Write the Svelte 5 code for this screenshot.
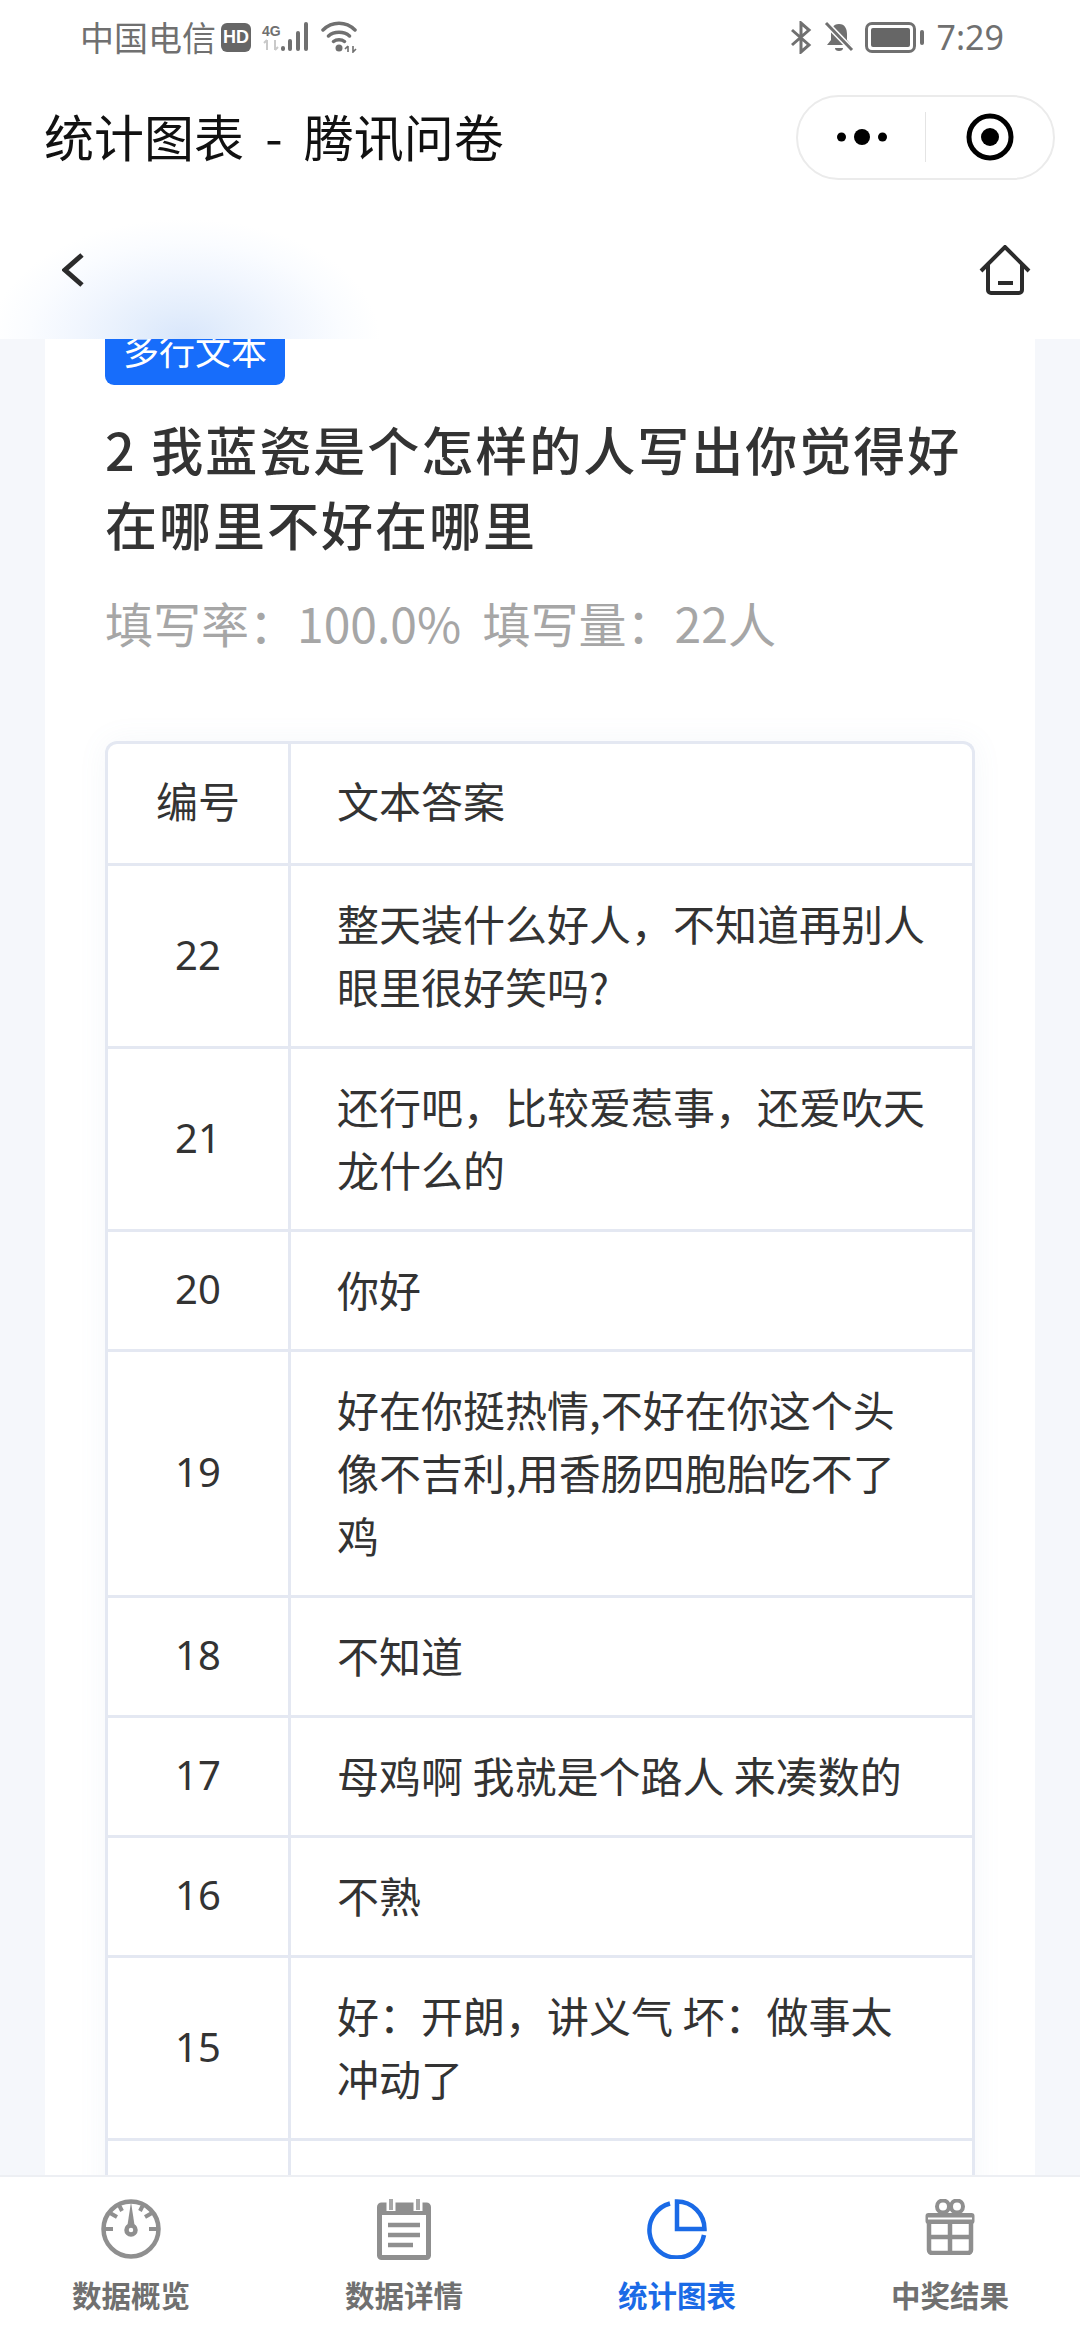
<script lang="ts">
    const rows = [
        { no: 22, text: '整天装什么好人，不知道再别人眼里很好笑吗?' },
        { no: 21, text: '还行吧，比较爱惹事，还爱吹天龙什么的' },
        { no: 20, text: '你好' },
        { no: 19, text: '好在你挺热情,不好在你这个头像不吉利,用香肠四胞胎吃不了鸡' },
        { no: 18, text: '不知道' },
        { no: 17, text: '母鸡啊 我就是个路人 来凑数的' },
        { no: 16, text: '不熟' },
        { no: 15, text: '好：开朗，讲义气 坏：做事太冲动了' }
    ];
    const tabs = [
        { id: 'overview', label: '数据概览' },
        { id: 'detail', label: '数据详情' },
        { id: 'chart', label: '统计图表' },
        { id: 'prize', label: '中奖结果' }
    ];
    const active = 'chart';
</script>

<div class="screen">
    <div class="status">
        <div class="status-left">
            <span class="carrier">中国电信</span>
            <span class="hd">HD</span>
            <span class="net">
                <span class="net-4g">4G</span>
                <svg width="18" height="12" viewBox="0 0 18 12"><path d="M5 1v10M2 4l3-3M13 1v10M13 11l3-3" fill="none" stroke="#c9c9c9" stroke-width="2"/></svg>
            </span>
            <svg class="bars" width="30" height="32" viewBox="0 0 30 32">
                <rect x="0" y="25" width="4" height="5" rx="2" fill="#707070"/>
                <rect x="7" y="18" width="4" height="12" rx="2" fill="#707070"/>
                <rect x="15" y="10" width="4" height="20" rx="2" fill="#707070"/>
                <rect x="23" y="1" width="4" height="29" rx="2" fill="#707070"/>
            </svg>
            <svg class="wifi" width="38" height="32" viewBox="0 0 38 32">
                <path d="M2 9C11 0 25 0 34 9M7.500 15C13 10 23 10 28.500 15M12.500 20.500C15.500 18 20.500 18 23.500 20.500" fill="none" stroke="#707070" stroke-width="3.500" stroke-linecap="round"/>
                <circle cx="18" cy="27" r="3.500" fill="#707070"/>
                <path d="M27 25v6M24 28l3-3M32 25v6l3-3" fill="none" stroke="#707070" stroke-width="1.600"/>
            </svg>
        </div>
        <div class="status-right">
            <svg width="22" height="33" viewBox="0 0 22 33">
                <path d="M2 9l17 15-8 7V2l8 7L2 24" fill="none" stroke="#707070" stroke-width="3"/>
            </svg>
            <svg width="30" height="32" viewBox="0 0 30 32">
                <path d="M15 3c6 0 8 5 8 10v6l4 5H3l4-5v-6c0-5 2-10 8-10z" fill="#707070"/>
                <path d="M11 27h8a4 3 0 0 1-8 0z" fill="#707070"/>
                <path d="M3 3l25 26" stroke="#fff" stroke-width="6"/>
                <path d="M2 2l26 27" stroke="#707070" stroke-width="3"/>
            </svg>
            <span class="battery"><span class="battery-fill"></span></span>
            <span class="battery-nub"></span>
            <span class="time">7:29</span>
        </div>
    </div>

    <div class="nav">
        <span class="nav-title">统计图表 - 腾讯问卷</span>
        <div class="capsule">
            <div class="capsule-part">
                <svg width="50" height="18" viewBox="0 0 50 18">
                    <circle cx="4.500" cy="9" r="4.500"/><circle cx="25" cy="9" r="8"/><circle cx="45.500" cy="9" r="4.500"/>
                </svg>
            </div>
            <div class="capsule-part last">
                <svg width="48" height="48" viewBox="0 0 48 48">
                    <circle cx="24" cy="24" r="21" fill="none" stroke="#000" stroke-width="5"/>
                    <circle cx="24" cy="24" r="9"/>
                </svg>
            </div>
        </div>
    </div>

    <div class="subnav">
        <svg width="24" height="36" viewBox="0 0 24 36">
            <path d="M20 3L3 18l17 15" fill="none" stroke="#2b2b2b" stroke-width="5"/>
        </svg>
        <svg width="54" height="52" viewBox="0 0 54 52">
            <path d="M3 26L27 2l24 24" fill="none" stroke="#2b2b2b" stroke-width="4"/>
            <path d="M10 20v25a3 3 0 0 0 3 3h28a3 3 0 0 0 3-3V20" fill="none" stroke="#2b2b2b" stroke-width="4"/>
            <path d="M20 38h15" stroke="#2b2b2b" stroke-width="4"/>
        </svg>
    </div>

    <main class="content">
        <section class="card">
            <span class="tag">多行文本</span>
            <h2 class="question">2 我蓝瓷是个怎样的人写出你觉得好在哪里不好在哪里</h2>
            <p class="stats">填写率：100.0%&nbsp;&nbsp;填写量：22人</p>
            <div class="table-wrap">
                <table>
                    <thead>
                        <tr><th class="no">编号</th><th class="ans">文本答案</th></tr>
                    </thead>
                    <tbody>
                        {#each rows as r}
                            <tr><td class="no">{r.no}</td><td class="ans">{r.text}</td></tr>
                        {/each}
                        <tr class="next"><td class="no"></td><td class="ans"></td></tr>
                    </tbody>
                </table>
            </div>
        </section>
    </main>

    <nav class="tabs">
        {#each tabs as t}
            <div class="tab" class:active={active === t.id}>
                {#if t.id === 'overview'}
                    <svg width="60" height="60" viewBox="0 0 60 60">
                        <circle cx="30" cy="30" r="27.500" fill="none" stroke="#8f8f8f" stroke-width="4.500"/>
                        <path d="M4 30h8M48 30h8M9 14l7 4M51 14l-7 4M18 6l3 6M42 6l-3 6" stroke="#8f8f8f" stroke-width="4"/>
                        <path d="M30 3l-3.500 23h7z" fill="#8f8f8f"/>
                        <circle cx="30" cy="31" r="4.500" fill="#fff" stroke="#8f8f8f" stroke-width="4.500"/>
                    </svg>
                {:else if t.id === 'detail'}
                    <svg width="54" height="61" viewBox="0 0 54 61">
                        <path d="M2.500 8a2 2 0 0 1 2-2h45a2 2 0 0 1 2 2v48.500a2 2 0 0 1-2 2h-45a2 2 0 0 1-2-2z" fill="none" stroke="#8f8f8f" stroke-width="5"/>
                        <path d="M1 5h52v11H1z" fill="#8f8f8f"/>
                        <path d="M14 0v12M41 0v12" stroke="#fff" stroke-width="9"/>
                        <path d="M14 0v11M41 0v11" stroke="#a8a8a8" stroke-width="4"/>
                        <path d="M11 26h32M11 36h32M11 46h25" stroke="#8f8f8f" stroke-width="4.500"/>
                    </svg>
                {:else if t.id === 'chart'}
                    <svg width="60" height="60" viewBox="0 0 60 60">
                        <path d="M23 4.500A27.500 27.500 0 1 0 57 36" fill="none" stroke="#1a6ae6" stroke-width="4.500"/>
                        <path d="M30 2.500A27.500 27.500 0 0 1 57.500 30H30z" fill="none" stroke="#1a6ae6" stroke-width="4.500"/>
                    </svg>
                {:else}
                    <svg width="54" height="56" viewBox="0 0 54 56">
                        <circle cx="20" cy="7.500" r="6" fill="none" stroke="#8f8f8f" stroke-width="4"/>
                        <circle cx="34" cy="7.500" r="6" fill="none" stroke="#8f8f8f" stroke-width="4"/>
                        <rect x="2.500" y="14" width="49" height="11" rx="3" fill="#8f8f8f"/>
                        <path d="M6 22h42v29a3 3 0 0 1-3 3H9a3 3 0 0 1-3-3z" fill="none" stroke="#8f8f8f" stroke-width="4.500"/>
                        <path d="M27 25v28M6 38h42" stroke="#8f8f8f" stroke-width="4.500"/>
                        <path d="M5 19.500h44" stroke="#fff" stroke-width="2"/>
                    </svg>
                {/if}
                <span class="tab-label">{t.label}</span>
            </div>
        {/each}
    </nav>
</div>

<style>
    :global(body) {
        margin: 0;
        background: #fff;
    }
    .screen {
        width: 1080px;
        height: 2340px;
        display: flex;
        flex-direction: column;
        overflow: hidden;
        font-family: "Noto Sans CJK SC", "Noto Sans", sans-serif;
        background: #f5f7fb;
    }

    .status {
        height: 70px;
        flex: none;
        box-sizing: border-box;
        background: #fff;
        display: flex;
        justify-content: space-between;
        align-items: center;
        padding: 4px 76px 0 80px;
        color: #707070;
    }
    .status-left, .status-right {
        display: flex;
        align-items: center;
    }
    .carrier {
        font-size: 34px;
        line-height: 36px;
    }
    .hd {
        margin-left: 5px;
        width: 30px;
        height: 29px;
        border-radius: 6px;
        background: #666;
        color: #fff;
        font: 700 18px/29px "Liberation Sans", sans-serif;
        text-align: center;
    }
    .net {
        margin-left: 11px;
        width: 18px;
        display: flex;
        flex-direction: column;
    }
    .net-4g {
        font: 700 14px/15px "Liberation Sans", sans-serif;
        color: #707070;
    }
    .bars { margin-left: 1px; }
    .wifi { margin-left: 10px; }
    .status-right svg + svg { margin-left: 12px; }
    .battery {
        margin-left: 11px;
        width: 51px;
        height: 31px;
        box-sizing: border-box;
        border: 3px solid #707070;
        border-radius: 7px;
        padding: 3px;
        display: flex;
    }
    .battery-fill {
        flex: 1;
        background: #666;
        border-radius: 2px;
    }
    .battery-nub {
        margin-left: 4px;
        width: 4px;
        height: 15px;
        background: #707070;
        border-radius: 2px;
    }
    .time {
        margin-left: 13px;
        font: 34px/36px "Noto Sans", sans-serif;
    }

    .nav {
        height: 130px;
        flex: none;
        background: #fff;
        display: flex;
        align-items: center;
        justify-content: space-between;
        padding: 0 25px 0 44px;
        box-sizing: border-box;
    }
    .nav-title {
        font-size: 50px;
        line-height: 60px;
        color: #111;
        word-spacing: 10px;
    }
    .capsule {
        margin-top: 4px;
        width: 259px;
        height: 85px;
        box-sizing: border-box;
        border: 2px solid #ebebeb;
        border-radius: 43px;
        display: flex;
        align-items: center;
    }
    .capsule-part {
        width: 128px;
        height: 50px;
        display: flex;
        align-items: center;
        justify-content: center;
    }
    .capsule-part.last {
        border-left: 1px solid #e4e4e4;
    }

    .subnav {
        height: 139px;
        flex: none;
        box-sizing: border-box;
        display: flex;
        align-items: center;
        justify-content: space-between;
        padding: 0 48px 0 62px;
        background: radial-gradient(ellipse 195px 120px at 185px 100%, #d8e6fb 0%, #e4eefc 25%, #f1f6fe 55%, #fafcff 80%, rgba(255, 255, 255, 0) 100%), #fff;
        position: relative;
        z-index: 1;
    }
    .subnav svg:last-child { margin-top: 2px; }

    .content {
        flex: 1;
        min-height: 0;
        overflow: hidden;
        padding: 0 45px;
    }
    .card {
        margin-top: -40px;
        padding: 20px 60px 0;
        background: #fff;
        border-radius: 20px;
    }
    .tag {
        display: inline-block;
        vertical-align: top;
        padding: 0 18px;
        height: 66px;
        line-height: 61px;
        border-radius: 9px;
        background: #176dfb;
        color: #fff;
        font-size: 36px;
    }
    .question {
        margin: 26px 0 0;
        font-size: 52px;
        line-height: 75px;
        font-weight: 500;
        color: #333;
        letter-spacing: 2px;
        word-spacing: 1px;
    }
    .stats {
        margin: 31px 0 0;
        font-size: 48px;
        line-height: 60px;
        color: #a6a6a6;
    }
    .table-wrap {
        margin-top: 89px;
        box-shadow: 0 0 30px rgba(120, 140, 190, 0.07);
        border-radius: 12px;
    }
    table {
        width: 870px;
        table-layout: fixed;
        border-collapse: separate;
        border-spacing: 0;
        border: 3px solid #e4e8f2;
        border-bottom: 0;
        border-radius: 12px 12px 0 0;
        box-sizing: border-box;
        color: #333;
        font-size: 42px;
        line-height: 63px;
    }
    th, td {
        padding: 25px 0 29px;
        border-bottom: 3px solid #e4e8f2;
        font-weight: 400;
        text-align: left;
    }
    th { padding: 24px 0 32px; }
    .next td { height: 63px; }
    .no {
        width: 180px;
        text-align: center;
        border-right: 3px solid #e4e8f2;
    }
    td.no {
        font-family: "Noto Sans", sans-serif;
        font-size: 40px;
    }
    .ans {
        padding-left: 46px;
        padding-right: 45px;
    }

    .tabs {
        height: 165px;
        flex: none;
        box-sizing: border-box;
        background: #fff;
        border-top: 2px solid #edeff3;
        display: flex;
        justify-content: space-between;
        padding: 22px 71px 0 72px;
        position: relative;
        z-index: 1;
    }
    .tab {
        width: 118px;
        display: flex;
        flex-direction: column;
        align-items: center;
        height: 115px;
        justify-content: space-between;
    }
    .tab-label {
        font-size: 29.500px;
        line-height: 40px;
        font-weight: 700;
        color: #707070;
        white-space: nowrap;
    }
    .tab.active .tab-label {
        color: #1a6ae6;
    }
</style>
